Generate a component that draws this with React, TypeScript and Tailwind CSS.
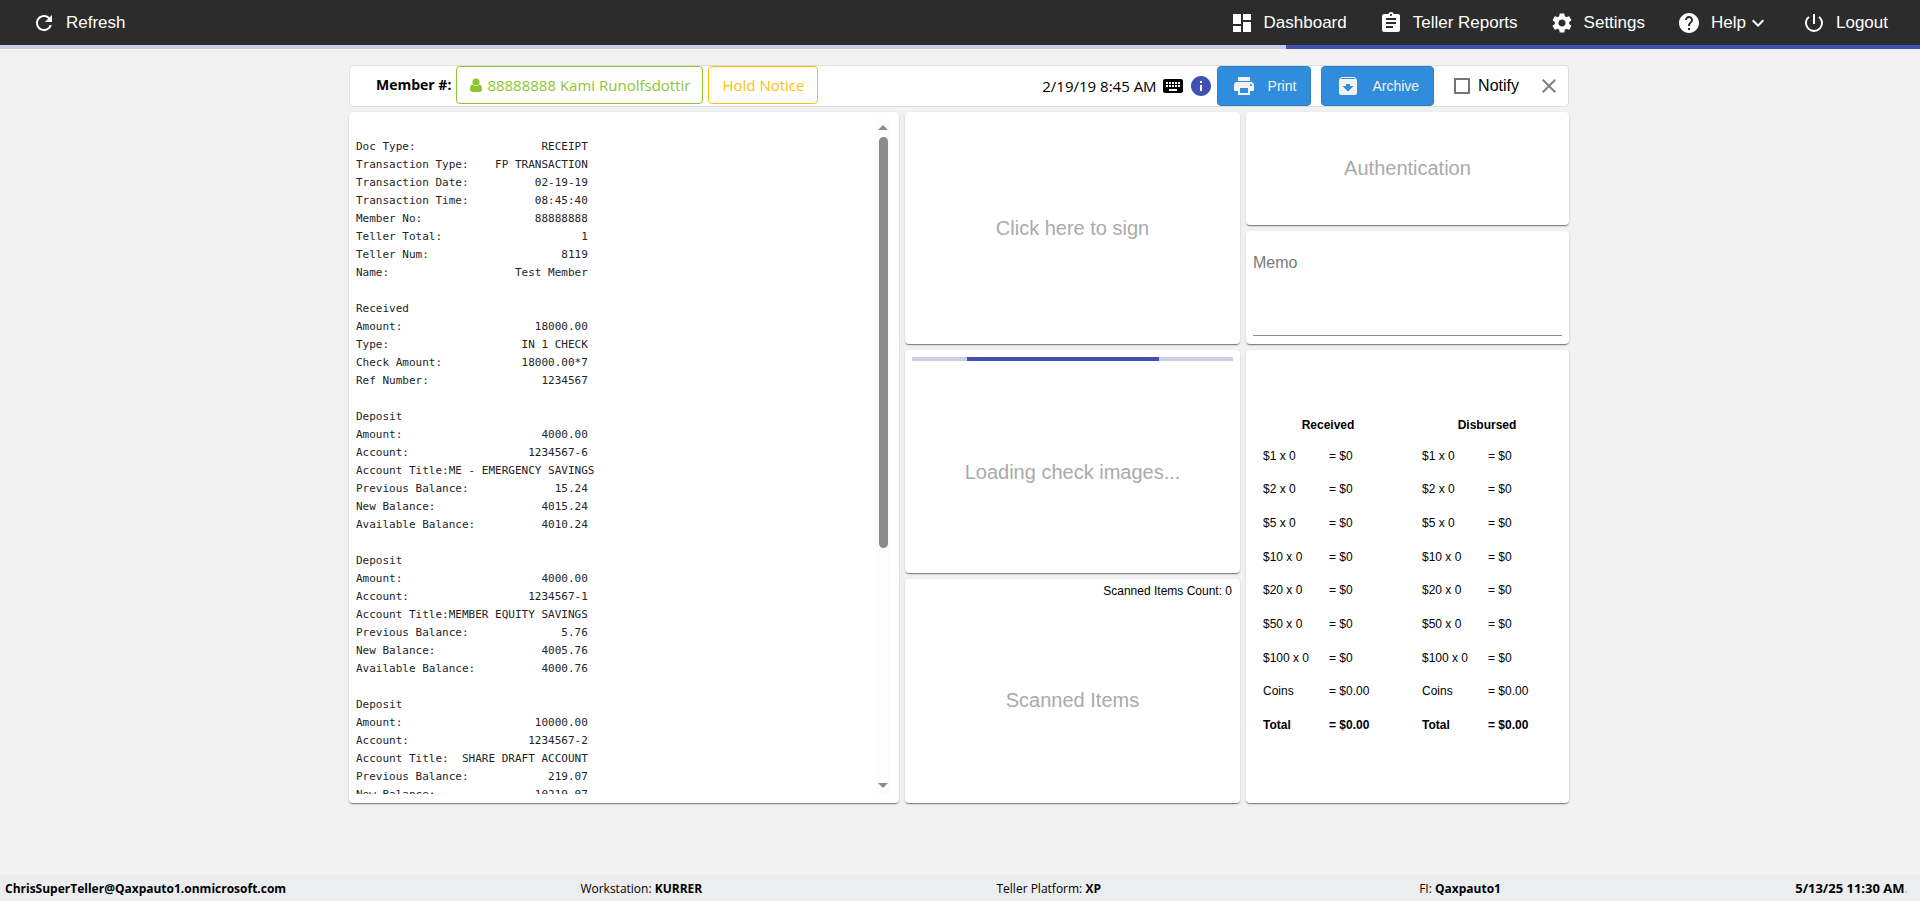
import type { ReactNode } from "react";
import {
  MdArchive,
  MdAssignment,
  MdClose,
  MdDashboard,
  MdExpandMore,
  MdHelp,
  MdInfo,
  MdKeyboard,
  MdPowerSettingsNew,
  MdPrint,
  MdRefresh,
  MdSettings,
} from "react-icons/md";

const receipt: [string, string?][] = [
  [""],
  ["Doc Type:", "RECEIPT"],
  ["Transaction Type:", "FP TRANSACTION"],
  ["Transaction Date:", "02-19-19"],
  ["Transaction Time:", "08:45:40"],
  ["Member No:", "88888888"],
  ["Teller Total:", "1"],
  ["Teller Num:", "8119"],
  ["Name:", "Test Member"],
  [""],
  ["Received"],
  ["Amount:", "18000.00"],
  ["Type:", "IN 1 CHECK"],
  ["Check Amount:", "18000.00*7"],
  ["Ref Number:", "1234567"],
  [""],
  ["Deposit"],
  ["Amount:", "4000.00"],
  ["Account:", "1234567-6"],
  ["Account Title:ME - EMERGENCY SAVINGS"],
  ["Previous Balance:", "15.24"],
  ["New Balance:", "4015.24"],
  ["Available Balance:", "4010.24"],
  [""],
  ["Deposit"],
  ["Amount:", "4000.00"],
  ["Account:", "1234567-1"],
  ["Account Title:", "MEMBER EQUITY SAVINGS"],
  ["Previous Balance:", "5.76"],
  ["New Balance:", "4005.76"],
  ["Available Balance:", "4000.76"],
  [""],
  ["Deposit"],
  ["Amount:", "10000.00"],
  ["Account:", "1234567-2"],
  ["Account Title:", "SHARE DRAFT ACCOUNT"],
  ["Previous Balance:", "219.07"],
  ["New Balance:", "10219.07"],
];

// Receipts are printed 35 characters wide
const receiptText = receipt
  .map(([label, value]) => (value ? label + value.padStart(35 - label.length) : label))
  .join("\n");

const denominations = ["$1", "$2", "$5", "$10", "$20", "$50", "$100"];

export default function App() {
  return (
    <div className="flex h-screen min-h-[640px] flex-col bg-[#f2f2f2] font-['Liberation_Sans',Arial,sans-serif] text-black">
      {/* Top bar */}
      <header className="flex h-[45px] shrink-0 items-center justify-between bg-[#2c2c2c] px-8 text-[17px] text-white">
        <NavButton icon={<MdRefresh className="size-6" />} label="Refresh" />
        <nav className="flex items-center gap-8">
          <NavButton icon={<MdDashboard className="size-6" />} label="Dashboard" />
          <NavButton icon={<MdAssignment className="size-6" />} label="Teller Reports" />
          <NavButton icon={<MdSettings className="size-6" />} label="Settings" />
          <NavButton
            icon={<MdHelp className="size-6" />}
            label="Help"
            trailing={<MdExpandMore className="size-6 stroke-current" />}
          />
          <NavButton icon={<MdPowerSettingsNew className="size-6" />} label="Logout" />
        </nav>
      </header>
      <div className="flex h-1 shrink-0 justify-end bg-[#c9cee8]">
        <div className="w-[33%] bg-[#3f51b5]" />
      </div>

      <main className="mx-auto flex min-h-0 w-full max-w-[1222px] flex-1 flex-col gap-[5px] pt-4 pr-0.5 pb-[72px]">
        <Toolbar />

        <div className="grid min-h-0 flex-1 grid-cols-[550fr_335fr_323fr] gap-1.5">
          {/* Receipt */}
          <Card className="flex min-h-0 justify-between pt-[7px] pr-[9px] pb-[9px] pl-[7px]">
            <pre className="min-h-0 overflow-hidden pt-px font-['DejaVu_Sans_Mono',Consolas,monospace] text-[11px] leading-[18px] text-[#212529]">
              {receiptText}
            </pre>
            <div className="flex w-[14px] flex-col items-center bg-[#fcfcfc] py-[6px]">
              <svg viewBox="0 0 10 5" className="h-[5px] w-[10px] fill-[#8b8b8b]">
                <path d="M5 0 10 5H0Z" />
              </svg>
              <div className="flex w-[9px] flex-1 flex-col pt-[7px] pb-1">
                <div className="h-[64%] rounded-full bg-[#8b8b8b]" />
              </div>
              <svg viewBox="0 0 10 5" className="h-[5px] w-[10px] fill-[#8b8b8b]">
                <path d="M0 0H10L5 5Z" />
              </svg>
            </div>
          </Card>

          {/* Signature, checks, scanned items */}
          <div className="grid min-h-0 grid-rows-[232fr_223fr_224fr] gap-1.5">
            <Card className="flex">
              <button className="flex-1 text-xl text-[#aaa]">Click here to sign</button>
            </Card>
            <Card className="flex flex-col p-[7px] pb-0">
              <div className="flex h-1 bg-[#c9cee8]">
                <div className="ml-[17%] w-[60%] bg-[#3f51b5]" />
              </div>
              <div className="flex flex-1 items-center justify-center pt-2.5 text-xl text-[#aaa]">
                Loading check images...
              </div>
            </Card>
            <Card className="flex flex-col">
              <div className="px-2 pt-1 text-right text-xs leading-4">Scanned Items Count: 0</div>
              <div className="flex flex-1 items-center justify-center pb-0.5 text-xl text-[#aaa]">
                Scanned Items
              </div>
            </Card>
          </div>

          {/* Authentication, memo, cash */}
          <div className="grid min-h-0 grid-rows-[113fr_113fr_453fr] gap-1.5">
            <Card className="flex">
              <button className="flex-1 pb-0.5 text-xl text-[#aaa]">Authentication</button>
            </Card>
            <Card className="flex px-[7px] py-2">
              <textarea
                aria-label="Memo"
                placeholder="Memo"
                className="w-full flex-1 resize-none border-b border-[#8c8c8c] bg-transparent pt-3 text-base outline-none placeholder:text-[#7a7a7a]"
              />
            </Card>
            <Card className="flex items-center justify-center gap-[29px]">
              <CashTable title="Received" />
              <CashTable title="Disbursed" />
            </Card>
          </div>
        </div>
      </main>

      {/* Status bar */}
      <footer className="flex h-[26px] shrink-0 items-center justify-between bg-[#ecedef] pt-px pr-3 pl-[5px] font-['Open_Sans','Segoe_UI',sans-serif] text-[12px]">
        <b>ChrisSuperTeller@Qaxpauto1.onmicrosoft.com</b>
        <span>
          Workstation: <b>KURRER</b>
        </span>
        <span className="pr-6">
          Teller Platform: <b>XP</b>
        </span>
        <span>
          FI: <b>Qaxpauto1</b>
        </span>
        <span className="text-[13px]">
          <b>5/13/25 11:30 AM</b>
          <span className="text-[#b5b5b5]">.</span>
        </span>
      </footer>
    </div>
  );
}

function Toolbar() {
  return (
    <div className="flex h-[42px] shrink-0 items-start justify-between rounded border border-[#ddd] bg-white font-['Open_Sans','Segoe_UI',sans-serif] text-[15px]">
      <div className="flex items-center gap-[5px] pl-[26px]">
        <span className="text-sm font-bold">Member #:</span>
        <button className="flex h-[38px] items-center gap-1 rounded border border-[#8fc531] px-3 text-[#8fc531]">
          <svg viewBox="0 0 14 14" className="size-3.5 fill-current" aria-hidden="true">
            <circle cx="7" cy="4" r="3.6" />
            <path d="M3.6 6.6C5.4 8.6 8.6 8.6 10.4 6.6C12.4 7 13 8.8 13 11.2C13 13 12 14 10.6 14H3.4C2 14 1 13 1 11.2C1 8.8 1.6 7 3.6 6.6Z" />
          </svg>
          88888888 Kami Runolfsdottir
        </button>
        <button className="h-[38px] rounded border border-[#ffc107] px-[13px] text-[#ffc107]">
          Hold Notice
        </button>
      </div>
      <div className="flex h-10 items-center">
        <span className="mr-1">2/19/19 8:45 AM</span>
        <MdKeyboard className="mr-1 size-6" />
        <MdInfo className="mr-1 size-6 text-[#3f51b5]" />
        <ActionButton icon={<MdPrint className="size-6" />} label="Print" />
        <span className="w-2.5" />
        <ActionButton icon={<MdArchive className="size-6" />} label="Archive" />
        <label className="ml-5 flex items-center gap-2 font-['Liberation_Sans',Arial,sans-serif] text-base">
          <input
            type="checkbox"
            className="size-4 appearance-none border-2 border-[#757575] bg-white"
          />
          Notify
        </label>
        <button aria-label="Close" className="mr-[7px] ml-[18px]">
          <MdClose className="size-6 text-[#808080]" />
        </button>
      </div>
    </div>
  );
}

function NavButton({
  icon,
  label,
  trailing,
}: {
  icon: ReactNode;
  label: string;
  trailing?: ReactNode;
}) {
  return (
    <button className="flex items-center">
      {icon}
      <span className="ml-2.5">{label}</span>
      {trailing}
    </button>
  );
}

function ActionButton({ icon, label }: { icon: ReactNode; label: string }) {
  return (
    <button className="flex h-10 items-center gap-3 rounded border border-[#2b7fc6] bg-[#308ddc] px-3.5 font-['Liberation_Sans',Arial,sans-serif] text-sm text-[#f2f2f2]">
      {icon}
      {label}
    </button>
  );
}

function Card({ className, children }: { className: string; children: ReactNode }) {
  return (
    <section
      className={`rounded bg-white shadow-[0_2px_1px_-1px_rgba(0,0,0,0.3),0_1px_1px_0_rgba(0,0,0,0.2),0_1px_3px_0_rgba(0,0,0,0.12)] ${className}`}
    >
      {children}
    </section>
  );
}

function CashTable({ title }: { title: string }) {
  return (
    <table className="h-[331px] w-[130px] text-left text-xs">
      <thead>
        <tr className="h-7">
          <th colSpan={2} className="text-center">
            {title}
          </th>
        </tr>
      </thead>
      <tbody>
        {denominations.map((d) => (
          <tr key={d}>
            <td className="w-[66px]">{d} x 0</td>
            <td>= $0</td>
          </tr>
        ))}
        <tr>
          <td>Coins</td>
          <td>= $0.00</td>
        </tr>
        <tr className="font-bold">
          <td>Total</td>
          <td>= $0.00</td>
        </tr>
      </tbody>
    </table>
  );
}
